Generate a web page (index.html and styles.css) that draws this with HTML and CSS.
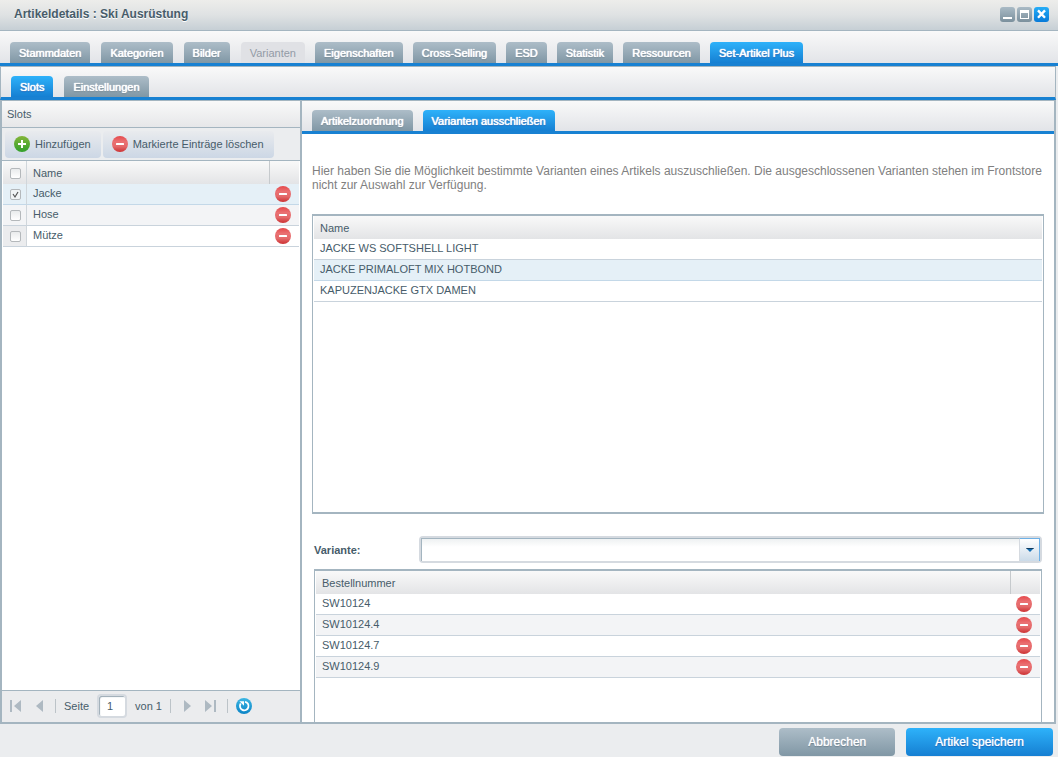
FILE: index.html
```html
<!DOCTYPE html>
<html lang="de">
<head>
<meta charset="utf-8">
<title>Artikeldetails : Ski Ausrüstung</title>
<link rel="stylesheet" href="styles.css">
</head>
<body>
<svg class="defs" aria-hidden="true">
  <defs>
    <linearGradient id="red" x1="0" y1="0" x2="0" y2="1"><stop offset="0" stop-color="#e5494b"/><stop offset=".35" stop-color="#ea7072"/><stop offset=".65" stop-color="#e46a6b"/><stop offset="1" stop-color="#cc3133"/></linearGradient>
    <linearGradient id="green" x1="0" y1="0" x2="0" y2="1"><stop offset="0" stop-color="#83b53a"/><stop offset="1" stop-color="#32a02c"/></linearGradient>
    <linearGradient id="blue" x1="0" y1="0" x2="0" y2="1"><stop offset="0" stop-color="#3cb6e3"/><stop offset="1" stop-color="#0b84c6"/></linearGradient>
    <symbol id="minus" viewBox="0 0 16 16"><circle cx="8" cy="8" r="8" fill="url(#red)"/><rect x="4" y="7" width="8" height="2" rx=".5" fill="#fff"/></symbol>
    <symbol id="plus" viewBox="0 0 16 16"><circle cx="8" cy="8" r="8" fill="url(#green)"/><path d="M8 4v8M4 8h8" stroke="#fff" stroke-width="2"/></symbol>
    <symbol id="reload" viewBox="0 0 16 16"><circle cx="8" cy="8" r="8" fill="url(#blue)"/><path d="M9 3.8A4.3 4.3 0 1 1 4.7 5.6" fill="none" stroke="#fff" stroke-width="1.8"/><path d="M3.4 3.2h4.6v4.6z" fill="#fff"/></symbol>
  </defs>
</svg>
<div class="window">
  <header class="titlebar">
    <h1 class="title">Artikeldetails : Ski Ausrüstung</h1>
    <div class="tools">
      <button class="tool" aria-label="Minimieren"><svg viewBox="0 0 15 15"><path d="M3 10h9v2H3z" fill="#fff"/></svg></button>
      <button class="tool" aria-label="Maximieren"><svg viewBox="0 0 15 15"><path fill-rule="evenodd" d="M3 3h9v9H3zM4 6v5h7V6z" fill="#fff"/></svg></button>
      <button class="tool tool-close" aria-label="Schließen"><svg viewBox="0 0 15 15"><path d="M4 3.4l7 7.4M11 3.4l-7 7.4" stroke="#fff" stroke-width="2.4"/></svg></button>
    </div>
  </header>
  <nav class="tabbar tabbar-main">
    <div class="tab-group tab-group-wide">
      <button class="tab">Stammdaten</button>
      <button class="tab">Kategorien</button>
      <button class="tab">Bilder</button>
      <button class="tab" disabled>Varianten</button>
    </div>
    <div class="tab-group">
      <button class="tab">Eigenschaften</button>
      <button class="tab">Cross-Selling</button>
      <button class="tab">ESD</button>
      <button class="tab">Statistik</button>
      <button class="tab">Ressourcen</button>
      <button class="tab tab-active">Set-Artikel Plus</button>
    </div>
  </nav>
  <nav class="tabbar tabbar-sub">
    <button class="tab tab-active">Slots</button>
    <button class="tab">Einstellungen</button>
  </nav>
  <main class="panels">
    <section class="slots">
      <h2 class="panel-title">Slots</h2>
      <div class="toolbar">
        <button class="action"><svg class="icon"><use href="#plus"/></svg>Hinzufügen</button>
        <button class="action"><svg class="icon"><use href="#minus"/></svg>Markierte Einträge löschen</button>
      </div>
      <table class="grid slots-grid">
        <thead><tr><th class="check"><input type="checkbox" aria-label="Alle auswählen"></th><th>Name</th><th class="act"></th></tr></thead>
        <tbody>
          <tr class="selected"><td class="check"><input type="checkbox" checked aria-label="Jacke"></td><td>Jacke</td><td class="act"><button class="remove" aria-label="Jacke löschen"><svg class="icon"><use href="#minus"/></svg></button></td></tr>
          <tr class="alt"><td class="check"><input type="checkbox" aria-label="Hose"></td><td>Hose</td><td class="act"><button class="remove" aria-label="Hose löschen"><svg class="icon"><use href="#minus"/></svg></button></td></tr>
          <tr><td class="check"><input type="checkbox" aria-label="Mütze"></td><td>Mütze</td><td class="act"><button class="remove" aria-label="Mütze löschen"><svg class="icon"><use href="#minus"/></svg></button></td></tr>
        </tbody>
      </table>
      <div class="paging">
        <button class="page" aria-label="Erste Seite"><svg viewBox="0 0 16 16"><path d="M3 2h2v12H3zM14 2v12L7 8z"/></svg></button>
        <button class="page" aria-label="Vorherige Seite"><svg viewBox="0 0 16 16"><path d="M12 2v12L5 8z"/></svg></button>
        <span class="sep"></span>
        <label for="page">Seite</label>
        <input class="page-no" id="page" type="text" value="1">
        <span>von 1</span>
        <span class="sep"></span>
        <button class="page" aria-label="Nächste Seite"><svg viewBox="0 0 16 16"><path d="M5 2v12l7-6z"/></svg></button>
        <button class="page" aria-label="Letzte Seite"><svg viewBox="0 0 16 16"><path d="M11 2h2v12h-2zM2 2v12l7-6z"/></svg></button>
        <span class="sep"></span>
        <button class="page" aria-label="Aktualisieren"><svg><use href="#reload"/></svg></button>
      </div>
    </section>
    <section class="detail">
      <nav class="tabbar tabbar-detail">
        <button class="tab">Artikelzuordnung</button>
        <button class="tab tab-active">Varianten ausschließen</button>
      </nav>
      <div class="detail-body">
        <p class="hint">Hier haben Sie die Möglichkeit bestimmte Varianten eines Artikels auszuschließen. Die ausgeschlossenen Varianten stehen im Frontstore nicht zur Auswahl zur Verfügung.</p>
        <div class="box box-articles">
          <table class="grid">
            <thead><tr><th>Name</th></tr></thead>
            <tbody>
              <tr><td>JACKE WS SOFTSHELL LIGHT</td></tr>
              <tr class="selected"><td>JACKE PRIMALOFT MIX HOTBOND</td></tr>
              <tr><td>KAPUZENJACKE GTX DAMEN</td></tr>
            </tbody>
          </table>
        </div>
        <div class="variants">
          <div class="field">
            <label class="field-label" for="variante">Variante:</label>
            <div class="combo">
              <select id="variante"><option></option></select>
              <span class="trigger"><svg viewBox="0 0 8 4"><path d="M0 0h8L4 4z" fill="#126fb5"/><path d="M0 0h8L7 1H1z" fill="#123a5c"/></svg></span>
            </div>
          </div>
          <div class="box box-numbers">
            <table class="grid numbers-grid">
              <thead><tr><th>Bestellnummer</th><th class="act"></th></tr></thead>
              <tbody>
                <tr><td>SW10124</td><td class="act"><button class="remove" aria-label="SW10124 löschen"><svg class="icon"><use href="#minus"/></svg></button></td></tr>
                <tr class="alt"><td>SW10124.4</td><td class="act"><button class="remove" aria-label="SW10124.4 löschen"><svg class="icon"><use href="#minus"/></svg></button></td></tr>
                <tr><td>SW10124.7</td><td class="act"><button class="remove" aria-label="SW10124.7 löschen"><svg class="icon"><use href="#minus"/></svg></button></td></tr>
                <tr class="alt"><td>SW10124.9</td><td class="act"><button class="remove" aria-label="SW10124.9 löschen"><svg class="icon"><use href="#minus"/></svg></button></td></tr>
              </tbody>
            </table>
          </div>
        </div>
      </div>
    </section>
  </main>
  <footer class="footer">
    <button class="btn btn-cancel">Abbrechen</button>
    <button class="btn btn-save">Artikel speichern</button>
  </footer>
</div>
</body>
</html>
```
FILE: styles.css
```css
* { box-sizing: border-box; }
body { margin: 0; font: 11px/14px "Liberation Sans", Arial, sans-serif; color: #475c6a; }
button, input, select { font: inherit; color: inherit; margin: 0; }
button { border: 0; padding: 0; background: none; cursor: pointer; }
svg { display: block; }
.defs { position: absolute; width: 0; height: 0; }
.icon { width: 16px; height: 16px; }

.window { display: flex; flex-direction: column; height: 100vh; background: #ebedef; }
.titlebar { display: flex; align-items: center; justify-content: space-between; height: 31px; padding: 0 9px 2px 14px; background: linear-gradient(#ededeb, #dfe2e3 50%, #c6cfd5); border-bottom: 1px solid #a4b5c0; }
.title { margin: 0; font-size: 12px; line-height: 16px; text-shadow: 0 1px 0 #fff; }
.tools { display: flex; gap: 2px; }
.tool { width: 15px; height: 15px; border-radius: 3px; background: linear-gradient(#a9bac5, #7b909d); }
.tool-close { background: linear-gradient(#25adf7, #087ad8); }

.tabbar { display: flex; align-items: flex-end; background: linear-gradient(#f9f9f9, #e2e4e8); border-bottom: 3px solid #1881d2; padding: 0 10px; gap: 10px; }
.tabbar-main { height: 35px; }
.tabbar-sub { height: 34px; gap: 11px; border-top: 1px solid #a4b5c0; border-left: 1px solid #a4b5c0; border-right: 1px solid #a4b5c0; margin-right: 2px; }
.tabbar-detail { height: 33px; }
.tab-group { display: flex; gap: 10px; }
.tab-group-wide { gap: 11px; }
.tab { height: 21px; padding: 1px 9px 0; border-radius: 4px 4px 0 0; background: linear-gradient(#adbdc8, #8097a5); color: #fff; white-space: nowrap; text-shadow: 0 0 1px #fff, 0 0 1px #fff, 0 1px 1px #5c7380; }
.tab-active { background: linear-gradient(#2eb2fa, #157fd2); text-shadow: 0 0 1px #fff, 0 0 1px #fff, 0 1px 1px #0c4fa8; }
.tab:disabled { background: #e0e1e5; color: #939ba5; text-shadow: none; }

.panels { flex: 1; display: flex; min-height: 0; margin-right: 2px; border: solid #a4b5c0; border-width: 1px 2px 2px; background: #fff; }
.slots { flex: 0 0 300px; display: flex; flex-direction: column; border-right: 2px solid #a4b5c0; }
.panel-title { margin: 0; height: 27px; padding: 6px 5px; font-size: 11px; line-height: 14px; font-weight: 400; background: linear-gradient(#f9f9f9, #e6e7e9); border-bottom: 1px solid #a4b5c0; }
.toolbar { display: flex; align-items: center; gap: 2px; height: 33px; padding: 0 3px; background: #ebedef; border-bottom: 1px solid #a4b5c0; }
.action { display: flex; align-items: center; gap: 5px; height: 27px; padding: 0 10px 0 9px; border-radius: 4px; background: linear-gradient(#e9ebee, #ccd7e5); white-space: nowrap; }

.grid { width: 100%; border-collapse: separate; border-spacing: 0; table-layout: fixed; }
.grid th { height: 23px; padding: 1px 6px; text-align: left; font-weight: 400; background: linear-gradient(#f9f9f9, #e3e4e6); }
.grid td { height: 21px; padding: 0 6px 2px; border-bottom: 1px solid #c9d3dc; }
.grid .alt td { background: #f3f4f6; }
.grid .selected td { background: #e5f0f7; border-bottom-color: #c3d8e8; }
.slots-grid { border-left: 1px solid #fff; border-right: 1px solid #fff; }
.grid .check { width: 24px; padding: 1px 0 0 7px; border-right: 1px solid #d0d6db; background: #ebecee; }
.grid th.check { background: linear-gradient(#f9f9f9, #e3e4e6); }
.grid .selected .check { background: #e5f0f7; }
.grid .act { width: 30px; padding: 0; }
.grid th.act { border-left: 1px solid #c6cacd; }
.slots-grid td.act { padding-left: 6px; }
.numbers-grid td.act { padding-left: 6px; }
.remove { display: block; }
.check input { appearance: none; display: block; width: 11px; height: 11px; border: 1px solid #b4b8bb; border-radius: 2px; background: linear-gradient(#e9ebec, #fff); }
.check input:checked { background: url("data:image/svg+xml,%3Csvg xmlns='http://www.w3.org/2000/svg' viewBox='0 0 9 9'%3E%3Cpath d='M2 4l2 3 3-5' fill='none' stroke='%23555' stroke-width='1.2'/%3E%3C/svg%3E") #f2f4f5; }

.paging { display: flex; align-items: center; gap: 8px; height: 32px; margin-top: auto; padding: 0 5px 2px; background: #ebecee; border-top: 1px solid #a4b5c0; }
.page { width: 16px; height: 16px; }
.page svg { width: 16px; height: 16px; fill: #aeb9c2; }
.sep { width: 1px; height: 14px; background: #bcc3c8; }
.page-no { width: 30px; height: 24px; padding: 0 0 0 8px; border: 2px solid #d5dae0; border-radius: 4px; outline: 0; background: #fff; box-shadow: inset 1px 1px 1px #9aa9b4; }

.detail { flex: 1; min-width: 0; display: flex; flex-direction: column; }
.detail-body { flex: 1; min-height: 0; display: flex; flex-direction: column; padding: 30px 10px 0; overflow: hidden; }
.hint { margin: 0 0 22px; font-size: 12px; line-height: 14px; color: #808080; }
.box { border: 1px solid #a4b5c0; border-top-width: 2px; padding: 0 1px; }
.box-articles { height: 300px; border-bottom-width: 2px; }
.variants { flex: 1; min-height: 0; display: flex; flex-direction: column; padding: 22px 2px 0; }
.field { display: flex; align-items: center; margin-bottom: 6px; }
.field-label { width: 105px; font-weight: 700; }
.combo { position: relative; flex: 1; height: 27px; border: 2px solid #d5dae0; border-radius: 4px; }
.combo select { display: block; appearance: none; width: 100%; height: 23px; padding: 0 24px 0 4px; border: 1px solid #a4b5c0; border-right: 0; border-bottom: 0; border-radius: 0; outline: 0; background: linear-gradient(#eef1f2, #fff 8px); }
.trigger { position: absolute; top: 0; right: 0; display: flex; align-items: center; justify-content: center; width: 21px; height: 23px; border: 1px solid #d5dae0; border-top-color: #6db0e6; border-right-color: #6db0e6; border-bottom: 0; background: linear-gradient(#fff, #cbdbe9); pointer-events: none; }
.trigger svg { width: 8px; height: 4px; }
.box-numbers { flex: 1; min-height: 0; border-bottom: 0; overflow: hidden; }

.footer { display: flex; justify-content: flex-end; gap: 11px; height: 33px; padding: 4px 5px 1px; }
.btn { height: 28px; border-radius: 4px; padding: 0 29px; color: #fff; font-size: 12px; text-align: center; }
.btn-cancel { background: linear-gradient(#adbdc8, #8097a5); text-shadow: 0 0 1px #fff, 0 1px 1px #5c7380; }
.btn-save { background: linear-gradient(#2eb2fa, #157fd2); text-shadow: 0 0 1px #fff, 0 1px 1px #0c4fa8; }
```
